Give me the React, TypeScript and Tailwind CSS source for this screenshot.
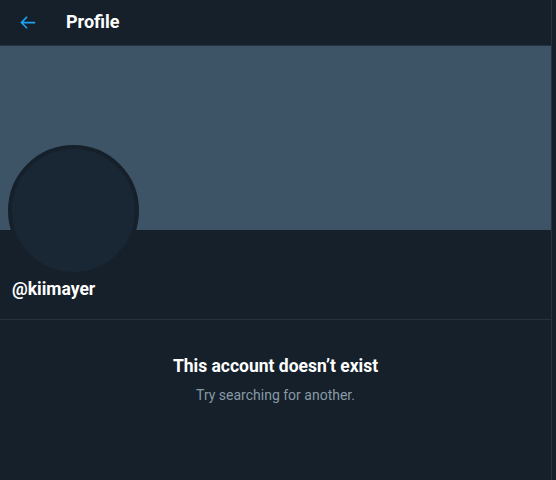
import React from 'react';

const App = () => {
  return (
    <div className="min-h-screen bg-[#15202b] flex" style={{ fontFamily: 'Roboto, "Liberation Sans", sans-serif' }}>
      <div className="w-[552px] min-h-[480px] border-r border-[#253341] flex flex-col">
        <div className="h-[46px] flex items-center border-b border-[#253341] px-4">
          <button className="w-[22px] h-[22px] flex items-center justify-center text-[#1da1f2]">
            <svg viewBox="0 0 24 24" className="w-[21px] h-[21px]" fill="currentColor">
              <path d="M20 11H7.414l4.293-4.293a1 1 0 0 0-1.414-1.414l-6 6a1 1 0 0 0 0 1.414l6 6a1 1 0 0 0 1.414-1.414L7.414 13H20a1 1 0 1 0 0-2z" />
            </svg>
          </button>
          <h1 className="ml-[28px] -mt-[2px] text-[18px] font-bold text-white leading-none">Profile</h1>
        </div>
        <div className="h-[184px] bg-[#3d5466]" />
        <div className="px-3 border-b border-[#253341] pb-[19px]">
          <div className="-mt-[85px] -ml-1 w-[131px] h-[131px] rounded-full bg-[#192734] border-4 border-[#15202b]" />
          <div className="mt-[2px] text-[17.5px] font-bold text-white leading-[22px]">@kiimayer</div>
        </div>
        <div className="flex flex-col items-center pt-[35px]">
          <div className="text-[17.5px] font-bold text-white leading-[22px]">This account doesn’t exist</div>
          <div className="mt-[8px] text-[14px] text-[#8899a6] leading-[20px]">Try searching for another.</div>
        </div>
      </div>
    </div>
  );
};

export default App;
